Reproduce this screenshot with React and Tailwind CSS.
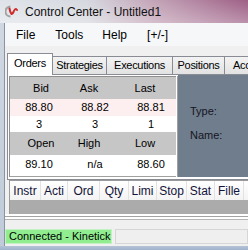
const SANS = "font-['Liberation_Sans',Arial,sans-serif]";

const tabs = [
  { label: "Orders", w: "w-[46px]", active: true },
  { label: "Strategies", w: "w-[54px]" },
  { label: "Executions", w: "w-[66px]" },
  { label: "Positions", w: "w-[52px]" },
  { label: "Accounts", w: "w-[60px]" },
];

const orderCols = [
  { label: "Instr", w: "w-[31px]" },
  { label: "Acti", w: "w-[27px]" },
  { label: "Ord", w: "w-[32px]" },
  { label: "Qty", w: "w-[29px]" },
  { label: "Limi", w: "w-[28px]" },
  { label: "Stop", w: "w-[30px]" },
  { label: "Stat", w: "w-[28px]" },
  { label: "Fille", w: "w-[29px]" },
  { label: "", w: "w-[30px]" },
];

function AppIcon() {
  return (
    <svg width="13" height="13" viewBox="0 0 13 13" fill="none">
      <path d="M5.5 1.5 A5 5 0 0 0 5.5 11.5" stroke="#a3a3a3" strokeWidth="2" />
      <path d="M4.5 3.5 Q6 12 8.5 7 Q10 2.5 12 5" stroke="#d02a2a" strokeWidth="2" strokeLinecap="round" />
    </svg>
  );
}

function HeaderRow({ labels, h }) {
  return (
    <div className={`flex items-center pl-[11px] bg-[#c6c6c6] ${h}`}>
      <div className="w-[40px] text-center">{labels[0]}</div>
      <div className="w-[40px] ml-[8px] text-center">{labels[1]}</div>
      <div className="w-[40px] ml-[16px] text-center">{labels[2]}</div>
    </div>
  );
}

function ValueRow({ values, h, bg }) {
  return (
    <div className={`flex items-center pl-[9px] gap-[16px] ${h} ${bg}`}>
      {values.map((v, i) => (
        <div key={i} className="w-[40px] text-center">
          {v}
        </div>
      ))}
    </div>
  );
}

export default function App() {
  return (
    <div className={`w-[248px] h-[250px] overflow-hidden flex flex-col bg-[#c3cedb] text-black ${SANS}`}>
      {/* title bar */}
      <div className="h-[23px] flex items-center pl-[5px] bg-[linear-gradient(180deg,rgba(255,255,255,0)_0%,rgba(255,255,255,0.3)_100%),linear-gradient(90deg,#dfe3e9_0%,#d6d8df_35%,#c3a3b7_62%,#9e6086_100%)]">
        <AppIcon />
        <span className="ml-[7px] text-[12px] leading-none whitespace-nowrap text-[#111]">Control Center - Untitled1</span>
      </div>

      <div className="flex h-[223px]">
        <div className="w-[5px] shrink-0 bg-[linear-gradient(180deg,#cfd7e2_0%,#bfcbd9_100%)] border-r border-[#8a93a0]" />

        <div className="flex-1 flex flex-col bg-[#f0f0f0] min-w-0">
          {/* menu */}
          <div className="h-[23px] flex items-center text-[12px] bg-[#f6f7f9] whitespace-nowrap">
            <span className="ml-[11px]">File</span>
            <span className="ml-[20px]">Tools</span>
            <span className="ml-[19px]">Help</span>
            <span className="ml-[20px]">[+/-]</span>
          </div>
          <div className="h-[7px]" />

          {/* tabs */}
          <div className="h-[22px] flex items-end pl-[2px] text-[11px] tracking-[-0.3px] whitespace-nowrap">
            {tabs.map((t) =>
              t.active ? (
                <div
                  key={t.label}
                  className={`${t.w} h-[22px] shrink-0 bg-white border border-b-0 border-[#898c95] flex items-center justify-center pb-[2px]`}
                >
                  {t.label}
                </div>
              ) : (
                <div
                  key={t.label}
                  className={`${t.w} h-[19px] shrink-0 bg-[linear-gradient(180deg,#f3f3f3_0%,#e2e2e2_100%)] border border-l-0 border-[#898c95] flex items-center justify-center`}
                >
                  {t.label}
                </div>
              )
            )}
            <div className="flex-1 border-b border-[#898c95]" />
          </div>

          {/* tab page */}
          <div className="ml-[2px] h-[105px] bg-white border-l border-b border-[#898c95] flex text-[11px] pl-[1px] pt-[1px] pb-[2px]">
            <div className="w-[167px] shrink-0 border-l border-t border-[#8f8f8f] flex flex-col">
              <HeaderRow labels={["Bid", "Ask", "Last"]} h="h-[22px]" />
              <ValueRow values={["88.80", "88.82", "88.81"]} h="h-[17px]" bg="bg-[#fdeef0]" />
              <ValueRow values={["3", "3", "1"]} h="h-[16px]" bg="bg-white" />
              <HeaderRow labels={["Open", "High", "Low"]} h="h-[23px]" />
              <ValueRow values={["89.10", "n/a", "88.60"]} h="h-[19px]" bg="bg-white" />
              <div className="flex-1 border-b border-[#a0a0a0]" />
            </div>
            <div className="w-[2px] shrink-0 border-r border-[#a0a0a0]" />
            <div className="flex-1 bg-[#6f7d8d] flex flex-col pl-[12px] text-[#15151f] -mt-[1px]">
              <div className="mt-[30px] leading-[13px]">Type:</div>
              <div className="mt-[11px] leading-[13px]">Name:</div>
            </div>
          </div>

          {/* orders table */}
          <div className="ml-[4px] border-t border-l border-[#9a9a9a] flex flex-col">
            <div className="h-[19px] flex text-[12px] text-[#14143a] bg-[linear-gradient(180deg,#ffffff_0%,#f3f3f3_100%)] whitespace-nowrap">
              {orderCols.map((c, i) => (
                <div key={i} className={`${c.w} shrink-0 border-r border-[#e2e2e2] flex items-center justify-center overflow-hidden`}>
                  {c.label}
                </div>
              ))}
            </div>
            <div className="h-[14px] bg-[#ababab]" />
          </div>
          <div className="h-[2px] bg-white" />
          <div className="h-[1px] bg-[#a3a3a3]" />
          <div className="h-[2px] bg-white" />
          <div className="h-[1px] bg-[#b5b5b5]" />
          <div className="h-[7px] bg-[#f0f0f0]" />

          {/* status bar */}
          <div className="h-[19px] flex pt-[2px] pb-[2px] text-[11px] whitespace-nowrap">
            <div className="w-[107px] shrink-0 bg-[#90ee90] border border-[#c4f1c4] flex items-center pl-[3px]">
              Connected - Kinetick
            </div>
            <div className="flex-1 ml-[3px] border border-[#d6d6d6] bg-[#efefef]" />
          </div>
        </div>
      </div>

      <div className="h-[4px] bg-[linear-gradient(180deg,#b5c3d5_0%,#9fb2cb_100%)]" />
    </div>
  );
}
